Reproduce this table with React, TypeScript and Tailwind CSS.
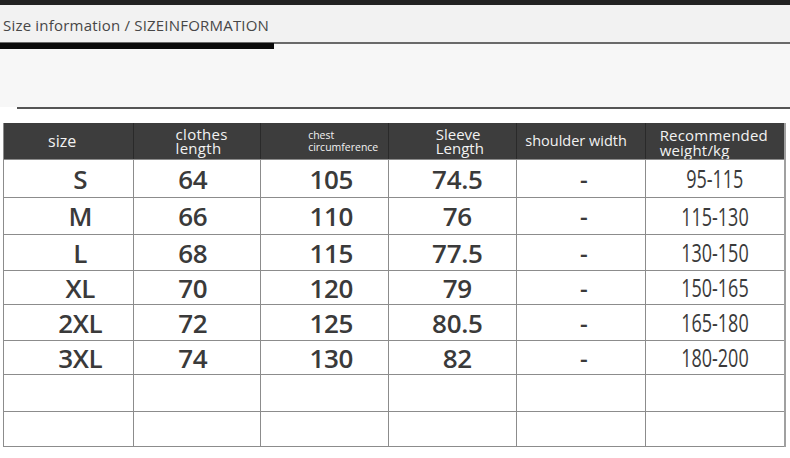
import React from "react";

const rows = [
  { h: "h-[38px]", v: ["S", "64", "105", "74.5", "-", "95-115"] },
  { h: "h-[37px]", v: ["M", "66", "110", "76", "-", "115-130"] },
  { h: "h-[36px]", v: ["L", "68", "115", "77.5", "-", "130-150"] },
  { h: "h-[34px]", v: ["XL", "70", "120", "79", "-", "150-165"] },
  { h: "h-[36px]", v: ["2XL", "72", "125", "80.5", "-", "165-180"] },
  { h: "h-[34px]", v: ["3XL", "74", "130", "82", "-", "180-200"] },
  { h: "h-[37px]", v: ["", "", "", "", "", ""] },
  { h: "h-[36px]", v: ["", "", "", "", "", ""] },
];

const widths = ["w-[130px]", "w-[128px]", "w-[128px]", "w-[129px]", "w-[129px]", "w-[139px]"];
const offsets = ["pl-[24px]", "pr-[8px]", "pl-[14px]", "pl-[10px]", "pl-[6px]", "pl-0"];

export default function App() {
  return (
    <div
      className="w-[790px] h-[458px] bg-white overflow-hidden flex flex-col"
      style={{ fontFamily: "'Open Sans', 'Noto Sans', sans-serif" }}
    >
      <div className="h-[5px] bg-[#222222] shrink-0" />
      <div className="h-[37px] bg-[#f2f2f2] flex items-center pl-[3px] pt-[3px] text-[15px] text-[#474747] shrink-0 tracking-[0.2px]">
        Size information / SIZEINFORMATION
      </div>
      <div className="h-[2px] bg-[#6a6a6a] shrink-0" />
      <div className="h-[63px] bg-[#f7f7f7] shrink-0 flex flex-col">
        <div className="w-[274px] h-[6px] -mt-[1px] bg-[#0a0a0a]" />
      </div>
      <div className="h-[2px] bg-[#555] ml-[17px] shrink-0" />
      <div className="h-[14px] shrink-0" />
      <div className="ml-[3px] w-[783px] border-l border-r-2 border-[#8c8c8c] border-r-[#a0a0a0] flex flex-col">
        <div className="h-[36px] bg-[#3d3d3d] text-[#f2f2f2] flex">
          <div className="w-[130px] border-r border-[#2a2a2a] flex items-center pl-[44px] text-[16px]">size</div>
          <div className="w-[128px] border-r border-[#2a2a2a] flex flex-col justify-center pl-[42px] text-[15px] leading-[14px] tracking-[0.3px]">
            <span>clothes</span>
            <span>length</span>
          </div>
          <div className="w-[128px] border-r border-[#2a2a2a] flex flex-col justify-center pl-[47px] text-[10.5px] leading-[12px]">
            <span>chest</span>
            <span>circumference</span>
          </div>
          <div className="w-[129px] border-r border-[#2a2a2a] flex flex-col justify-center pl-[47px] text-[15px] leading-[14px]">
            <span>Sleeve</span>
            <span>Length</span>
          </div>
          <div className="w-[129px] border-r border-[#2a2a2a] flex items-center pl-[8px] text-[14.5px]">shoulder width</div>
          <div className="w-[139px] flex flex-col justify-center pl-[14px] pt-[3px] text-[15px] leading-[15px] tracking-[0.2px]">
            <span>Recommended</span>
            <span>weight/kg</span>
          </div>
        </div>
        {rows.map((r, i) => (
          <div key={i} className={`${r.h} flex border-t border-[#8c8c8c] ${i === rows.length - 1 ? "border-b" : ""}`}>
            {r.v.map((c, j) => (
              <div
                key={j}
                className={`${widths[j]} ${offsets[j]} ${j < 5 ? "border-r border-[#8c8c8c]" : ""} flex items-center justify-center text-[#3a3a3a]`}
              >
                {j === 5 ? (
                  <span className="inline-block scale-x-[0.72] text-[25px] leading-none">{c}</span>
                ) : j === 4 ? (
                  <span className="text-[24px] font-semibold leading-none">{c}</span>
                ) : (
                  <span className="text-[26px] font-semibold leading-none tracking-[-0.3px]">{c}</span>
                )}
              </div>
            ))}
          </div>
        ))}
      </div>
    </div>
  );
}
